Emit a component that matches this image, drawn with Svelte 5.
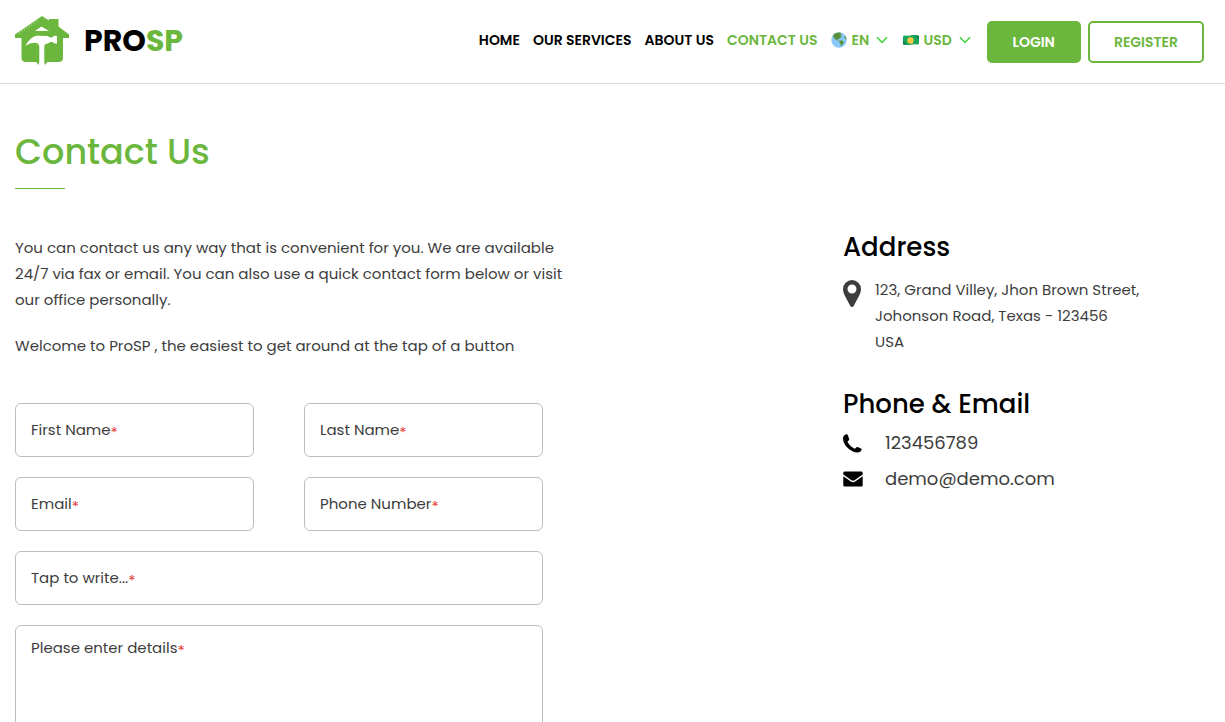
<script>
const links = [
  { label: "Home", href: "#home" },
  { label: "Our Services", href: "#services" },
  { label: "About Us", href: "#about" },
  { label: "Contact Us", href: "#contact", active: true }
];

const fields = [
  { id: "first-name", label: "First Name", type: "text" },
  { id: "last-name", label: "Last Name", type: "text" },
  { id: "email", label: "Email", type: "email" },
  { id: "phone", label: "Phone Number", type: "tel" },
  { id: "subject", label: "Tap to write...", type: "text", wide: true }
];

let values = $state({});
let details = $state("");
let language = $state("EN");
let currency = $state("USD");
</script>

{#snippet chevron()}
  <svg class="chevron" viewBox="0 0 12 8" aria-hidden="true">
    <path d="M1 1.2 6 6.4 11 1.2" fill="none" stroke="#3fd63a" stroke-width="1.5" />
  </svg>
{/snippet}

<header>
  <a class="logo" href="#home">
    <svg viewBox="0 0 54 50" aria-hidden="true">
      <path d="M27 0 34 4.500V3H43.500V10.500L54 18.500V22H48V41.500Q48 46 43.500 46H32.500L30 49 29 46H24.500L23 49 21.500 46H11Q6.500 46 6.500 41.500V22H0V18.500Z" fill="#6bb73d" />
      <path d="M20 15 26.500 10.500 34 15Z" fill="#fff" />
      <path d="M10.500 30C12.500 25.500 17 20 22.500 19.700L33 20C34.500 22 37.500 22 39 19.700L42 20V27.500H39.500C37 25.500 35 25.800 33 27.500 30.500 27.500 29.300 28.500 29.300 30.500V50H24.300V31C24.300 28.500 22.500 26.800 20 26.800 16 26.800 13.500 28 10.500 30Z" fill="#fff" />
      <path d="M4 17.500 24 4" stroke="#fff" stroke-width=".7" stroke-dasharray="1 2" />
    </svg>
    <span class="brand">PRO<span>SP</span></span>
  </a>

  <nav>
    {#each links as link}
      <a href={link.href} class:active={link.active}>{link.label}</a>
    {/each}

    <div class="picker">
      <svg class="globe" viewBox="0 0 16 16" aria-hidden="true">
        <circle cx="8" cy="8" r="7.700" fill="#88c9f9" />
        <path d="M2.500 2.800C4 1 6.500.2 9 .5L10.500 2 9.500 3.500 11 4.500 9 6 7.500 7.500 6 7 7.500 9 6 8.500 3.500 6.500 2 4.500ZM8.500 8.500 11 8.500 13 10 12 12 10 14.500 9.500 12 8 10ZM13 3.500 15 5 15.500 8 14 6.500Z" fill="#5c913b" />
      </svg>
      <select aria-label="Language" bind:value={language}>
        <option>EN</option>
      </select>
      {@render chevron()}
    </div>

    <div class="picker">
      <svg class="note" viewBox="0 0 16 10" aria-hidden="true">
        <path d="M1.500.5Q5 1.200 8 .3T15 .5Q16 .5 16 2V8.500Q16 9.500 14.500 9.500 11 8.800 8 9.700T1 9.500Q0 9.500 0 8V2Q0 .5 1.500.5Z" fill="#18a55a" />
        <path d="M0 6Q2.500 7 3 9.700L0 9.500ZM16 4Q13.500 3 13 .3L15 .5Q16 .5 16 2Z" fill="#0b7d42" />
        <circle cx="7.500" cy="5.500" r="3.200" fill="#fdc943" />
      </svg>
      <select aria-label="Currency" bind:value={currency}>
        <option>USD</option>
      </select>
      {@render chevron()}
    </div>
  </nav>

  <div class="account">
    <button type="button" class="btn solid">Login</button>
    <button type="button" class="btn">Register</button>
  </div>
</header>

<main>
  <h1>Contact Us</h1>

  <div class="columns">
    <section class="left">
      <div class="intro">
        <p>You can contact us any way that is convenient for you. We are available 24/7 via fax or email. You can also use a quick contact form below or visit our office personally.</p>
        <p>Welcome to ProSP , the easiest to get around at the tap of a button</p>
      </div>

      <form>
        {#each fields as field}
          <div class="field" class:wide={field.wide}>
            <input id={field.id} type={field.type} bind:value={values[field.id]} required />
            {#if !values[field.id]}
              <label for={field.id}>{field.label}<span>*</span></label>
            {/if}
          </div>
        {/each}
        <div class="field wide">
          <textarea id="details" bind:value={details} required></textarea>
          {#if !details}
            <label for="details">Please enter details<span>*</span></label>
          {/if}
        </div>
      </form>
    </section>

    <aside>
      <h2>Address</h2>
      <address>
        <svg class="pin" viewBox="0 0 18 27" aria-hidden="true">
          <path d="M9 0A9 9 0 0 0 0 9C0 14 4 19 7 25.500Q9 28.500 11 25.500C14 19 18 14 18 9A9 9 0 0 0 9 0ZM9 4.500A4.500 4.500 0 1 1 9 13.500 4.500 4.500 0 0 1 9 4.500Z" fill="#3d3d3d" fill-rule="evenodd" />
        </svg>
        <p>123, Grand Villey, Jhon Brown Street,<br />Johonson Road, Texas - 123456<br />USA</p>
      </address>

      <h2>Phone &amp; Email</h2>
      <ul>
        <li>
          <svg viewBox="0 0 20 20" aria-hidden="true">
            <path d="M3 1.300C1.300 2 0 3.300 0 5.300 0 12.500 8 19.500 14.500 19.500 16.500 19.500 18.200 18.200 18.600 16.800Q18.800 16 18 15.600L14.600 14Q13.800 13.700 13.200 14.400L12 15.700C9 14.500 5.500 11.300 4.500 8.500L5.900 7.200Q6.500 6.700 6.200 5.900L4.800 2Q4.200.9 3 1.300Z" />
          </svg>
          <a href="tel:123456789">123456789</a>
        </li>
        <li>
          <svg viewBox="0 0 20 20" aria-hidden="true">
            <path d="M1.500 2.500H18.500Q19.700 2.500 19.700 4V5.500L11.500 11.300Q10 12.200 8.500 11.300L.3 5.500V4Q.3 2.500 1.500 2.500ZM.3 7.300 7.500 12.300Q10 14 12.500 12.300L19.700 7.300V16Q19.700 17.500 18.500 17.500H1.500Q.3 17.500.3 16Z" />
          </svg>
          <a href="mailto:demo@demo.com">demo@demo.com</a>
        </li>
      </ul>
    </aside>
  </div>
</main>

<style>
:global(body) {
  margin: 0;
  background: #fff;
  color: #3d3d3d;
  font-family: Poppins, Inter, sans-serif;
  font-size: 15px;
  line-height: 26px;
}

h1, h2, p, ul {
  margin: 0;
  padding: 0;
  font-weight: 400;
}

a {
  color: inherit;
  text-decoration: none;
}

/* header */

header {
  display: flex;
  align-items: center;
  height: 83px;
  padding: 0 21px 0 15px;
  border-bottom: 1px solid #dcdcdc;
}

.logo {
  display: flex;
  align-items: center;
  gap: 15px;
  margin-right: auto;
  padding-bottom: 2px;
}

.logo svg {
  width: 54px;
  height: 50px;
}

.brand {
  color: #000;
  font-size: 30px;
  font-weight: 700;
}

.brand span {
  color: #6bb73d;
}

nav {
  display: flex;
  align-items: center;
  gap: 13px;
  margin-right: 16px;
  padding-bottom: 4px;
  color: #000;
  font-size: 14px;
  font-weight: 600;
  text-transform: uppercase;
}

nav .active {
  color: #6bb73d;
}

.picker {
  display: flex;
  align-items: center;
  position: relative;
}

.picker + .picker {
  margin-left: 2px;
}

.picker select {
  appearance: none;
  margin: 0;
  padding: 0 18px 0 5px;
  border: 0;
  background: none;
  color: #6bb73d;
  font: inherit;
  cursor: pointer;
}

.globe {
  width: 16px;
  height: 16px;
}

.note {
  width: 16px;
  height: 10px;
}

.chevron {
  position: absolute;
  right: 0;
  width: 12px;
  height: 8px;
  pointer-events: none;
}

.account {
  display: flex;
  gap: 7px;
}

.btn {
  height: 42px;
  padding: 0 24px;
  border: 2px solid #6bb73d;
  border-radius: 5px;
  background: #fff;
  color: #6bb73d;
  font: inherit;
  font-size: 14px;
  font-weight: 600;
  text-transform: uppercase;
  cursor: pointer;
}

.solid {
  background: #6bb73d;
  color: #fff;
}

/* page */

main {
  padding: 41px 15px 40px;
}

h1 {
  color: #6bb73d;
  font-size: 35px;
  font-weight: 500;
  line-height: 54px;
}

h1::after {
  content: "";
  display: block;
  width: 50px;
  height: 1px;
  margin-top: 9px;
  background: #6bb73d;
}

.columns {
  display: grid;
  grid-template-columns: 1fr 367px;
  margin-top: 38px;
}

.left {
  padding-top: 8px;
}

.intro {
  display: grid;
  gap: 20px;
  max-width: 552px;
}

form {
  display: grid;
  grid-template-columns: 1fr 1fr;
  gap: 20px 50px;
  max-width: 528px;
  margin-top: 44px;
}

.field {
  display: grid;
}

.wide {
  grid-column: 1 / -1;
}

/* the label sits in the same cell as its control */
.field label,
.field input,
.field textarea {
  grid-area: 1 / 1;
}

.field label {
  align-self: start;
  margin: 14px 16px 0;
  pointer-events: none;
}

.field label span {
  color: #e53935;
  line-height: 1;
  vertical-align: -3px;
}

input,
textarea {
  box-sizing: border-box;
  width: 100%;
  height: 54px;
  margin: 0;
  padding: 9px 15px;
  border: 1px solid #bdbdbd;
  border-radius: 6px;
  background: #fff;
  color: inherit;
  font: inherit;
}

textarea {
  height: 150px;
  resize: none;
}

.field textarea + label {
  margin-top: 10px;
}

/* contact details */

h2 {
  color: #000;
  font-size: 26px;
  font-weight: 500;
  line-height: 40px;
}

address {
  display: flex;
  gap: 14px;
  margin: 10px 0 29px;
  font-style: normal;
}

.pin {
  width: 18px;
  height: 27px;
  margin-top: 3px;
}

ul {
  padding-top: 1px;
  list-style: none;
  font-size: 18px;
  line-height: 36px;
}

li {
  display: flex;
  align-items: center;
  gap: 22px;
}

li svg {
  width: 20px;
  height: 20px;
  fill: #000;
}
</style>
